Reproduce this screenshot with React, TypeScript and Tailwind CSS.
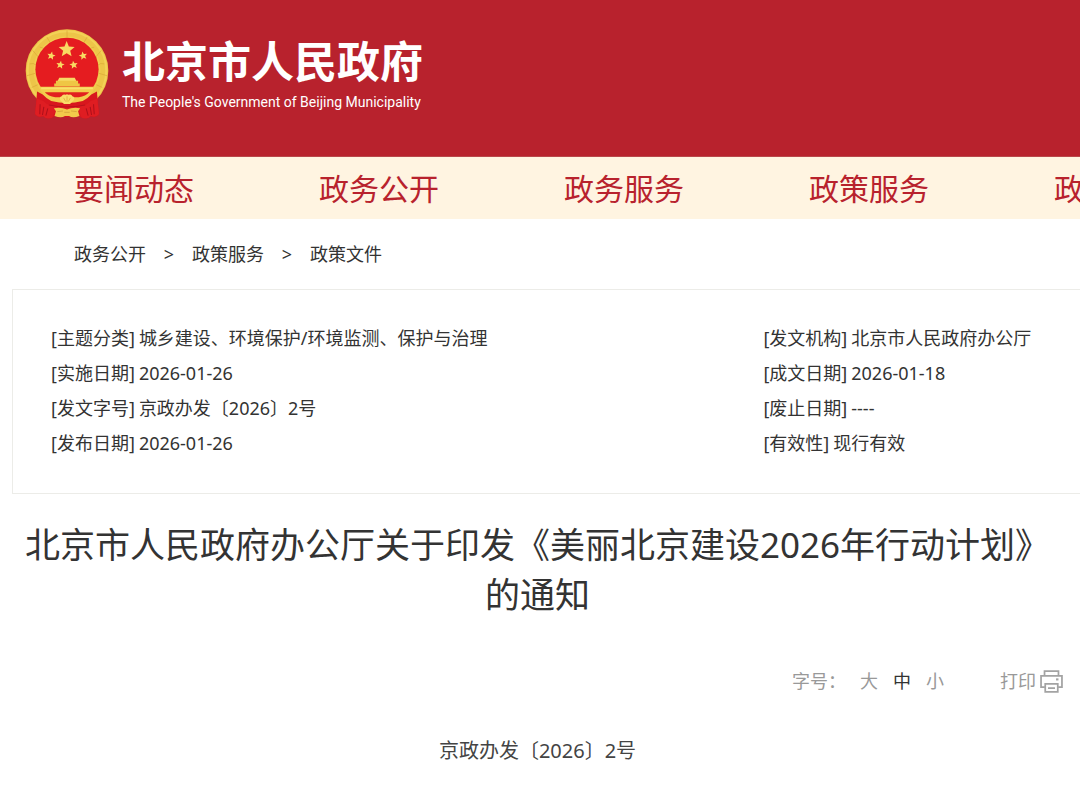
import { useState } from "react";

const navItems = ["要闻动态", "政务公开", "政务服务", "政策服务", "政民互动"];
const crumbs = ["政务公开", "政策服务", "政策文件"];

const meta: [string, string][] = [
  ["主题分类", "城乡建设、环境保护/环境监测、保护与治理"],
  ["发文机构", "北京市人民政府办公厅"],
  ["实施日期", "2026-01-26"],
  ["成文日期", "2026-01-18"],
  ["发文字号", "京政办发〔2026〕2号"],
  ["废止日期", "----"],
  ["发布日期", "2026-01-26"],
  ["有效性", "现行有效"],
];

const STAR = "M0 -10 L2.6 -3.5 L9.51 -3.09 L4.2 1.4 L5.88 8.09 L0 4.4 L-5.88 8.09 L-4.2 1.4 L-9.51 -3.09 L-2.6 -3.5 Z";

function Emblem() {
  return (
    <svg viewBox="32 24 250 272" className="h-[92px] w-[84px] shrink-0" aria-hidden="true">
      <circle cx="157" cy="150" r="123" fill="#edc548" />
      <circle cx="157" cy="150" r="117" fill="none" stroke="#f3d257" strokeWidth="6" />
      <circle cx="157" cy="148" r="97" fill="none" stroke="#f1cd50" strokeWidth="5" />
      <g stroke="#d9a735" strokeWidth="2" fill="none">
        <path d="M157 30v20M97 50l12 20M217 50l-12 20M55 90l17 20M259 90l-17 20M38 165l24-7M276 165l-24-7" />
        <path d="M76 80q14 2 18 10M238 80q-14 2-18 10M46 130q12-4 20 4M268 130q-12-4-20 4M52 200l18-8M262 200l-18-8" />
      </g>
      <circle cx="157" cy="146" r="94" fill="#e51c20" />
      <g fill="#f9da62">
        <path d={STAR} transform="translate(156 87) scale(2.5)" />
        <path d={STAR} transform="translate(110 106) rotate(12) scale(1.3)" />
        <path d={STAR} transform="translate(205 106) rotate(-12) scale(1.3)" />
        <path d={STAR} transform="translate(137 133) rotate(10) scale(1.3)" />
        <path d={STAR} transform="translate(177 133) rotate(-10) scale(1.3)" />
      </g>
      <path d="M134 171h46l5 10h-56z" fill="#f7da64" />
      <path d="M124 180h66v8h5v9H119v-9h5z" fill="#efc644" />
      <path d="M68 212q42 26 89 24q47 2 89-24l6 68q-8 12-24 6q-8 10-26 4l-12-6q-33 8-66 0l-12 6q-18 6-26-4q-16 6-24-6z" fill="#d8171e" />
      <path d="M76 198h162q-4 28-34 42q-47 12-94 0q-30-14-34-42z" fill="#f3cc4d" />
      <path d="M91 214h132q-10 12-31 15h-70q-21-3-31-15z" fill="#e2201f" />
      <path d="M80 203h154" stroke="#f9df6c" strokeWidth="5" />
      <path d="M137 238q-4-10 4-12q4-8 12-4q4-3 8 0q9-4 12 4q9 2 4 12l-11 11h-18z" fill="#f9dd69" />
      <path d="M147 231l6 11M157 226v17M167 231l-6 11" stroke="#d9a233" strokeWidth="2" />
      <path d="M67 233q16 4 30 16l12 4q48 12 96 0l12-4q14-12 30-16l5 46q-8 11-24 5q-8 12-27 6l-10-22q-34 7-68 0l-10 22q-19 6-27-6q-16 6-24-5z" fill="#df1d22" />
      <path d="M118 262q20-5 39 4q19-9 39-4l-6 9 4 14q-20 8-31 0h-12q-11 8-31 0l4-14z" fill="#f2ca4b" />
      <path d="M128 272l17-2M186 272l-17-2M149 274h16" stroke="#cd9634" strokeWidth="2" />
      <path d="M77 250l-1 30M88 258l-4 24M100 262l-6 22M236 250l2 30M226 258l4 24M214 262l6 22" stroke="#ad101a" strokeWidth="3" />
      <path d="M103 252q54 12 108 0" fill="none" stroke="#b8121b" strokeWidth="3" />
    </svg>
  );
}

function PrinterIcon() {
  return (
    <svg viewBox="0 0 66 66" className="size-[23px]" fill="none" stroke="#a3a3a3" strokeWidth="5" aria-hidden="true">
      <path d="M13 16V3h40v13" />
      <path d="M14 49H3V17h60v32H52" />
      <path d="M15 40h36v23H15zM23 52h20" />
      <path d="M46 27h7" strokeWidth="6" />
    </svg>
  );
}

export default function App() {
  const [size, setSize] = useState("中");

  return (
    <div className="min-h-screen overflow-hidden bg-white font-['Noto_Sans','Noto_Sans_CJK_SC',sans-serif] text-[#333]">
      <header className="flex h-[157px] items-start gap-[13px] border-b border-[#b9474a] bg-[#b8222d] pt-7 pl-[25px] text-white">
        <Emblem />
        <div className="pt-2">
          <div className="text-[43px] leading-[52px] font-bold whitespace-nowrap">北京市人民政府</div>
          <div className="font-['Roboto','Noto_Sans',sans-serif] text-[14px] leading-7 whitespace-nowrap">
            The People's Government of Beijing Municipality
          </div>
        </div>
      </header>

      <nav className="flex gap-[125px] overflow-hidden bg-[#fff4e1] pt-0.5 pl-[74px]">
        {navItems.map((item) => (
          <a key={item} href="#" className="shrink-0 text-[30px] leading-[60px] text-[#b8222d]">
            {item}
          </a>
        ))}
      </nav>

      <nav className="flex h-[70px] items-center pl-[74px] text-lg">
        {crumbs.map((crumb, i) => (
          <span key={crumb} className="flex">
            {i > 0 && <span className="w-[46px] text-center">&gt;</span>}
            <a href="#">{crumb}</a>
          </span>
        ))}
      </nav>

      <dl className="ml-3 grid grid-cols-[9fr_4fr] border-y border-l border-[#ecece8] pt-[31px] pb-8 pl-[38px] text-lg leading-[35px]">
        {meta.map(([label, value]) => (
          <div key={label} className="flex gap-1 whitespace-nowrap">
            <dt>[{label}]</dt>
            <dd>{value}</dd>
          </div>
        ))}
      </dl>

      <main className="pr-[17px] pl-3">
        <h1 className="pt-[26px] text-center text-[35px] leading-[50px]">
          北京市人民政府办公厅关于印发《美丽北京建设2026年行动计划》的通知
        </h1>

        <div className="mt-[45px] flex h-8 items-center justify-end text-lg text-[#999]">
          <span className="mr-3.5">字号：</span>
          <div className="mr-14 flex gap-[15px]">
            {["大", "中", "小"].map((s) => (
              <button
                key={s}
                type="button"
                onClick={() => setSize(s)}
                className={s === size ? "text-[#333]" : "text-[#999]"}
              >
                {s}
              </button>
            ))}
          </div>
          <button type="button" onClick={() => window.print()} className="flex items-center gap-1">
            打印
            <PrinterIcon />
          </button>
        </div>

        <p className="mt-9 text-center text-xl leading-[35px] text-[#444]">京政办发〔2026〕2号</p>
      </main>
    </div>
  );
}
